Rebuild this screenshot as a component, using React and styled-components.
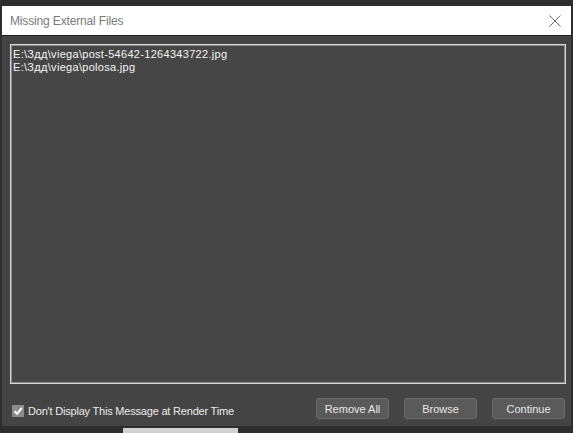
import React, { useState } from "react";
import styled, { createGlobalStyle } from "styled-components";

const Global = createGlobalStyle`
  html, body {
    margin: 0;
    padding: 0;
    background: #2e2e2e;
  }
  body {
    font-family: "Liberation Sans", Arial, sans-serif;
  }
`;

const Page = styled.div`
  width: 573px;
  height: 433px;
  overflow: hidden;
  background: #2e2e2e;
  display: flex;
  flex-direction: column;
`;

const Window = styled.div`
  margin: 6px 2px 0 2px;
  width: 569px;
  display: flex;
  flex-direction: column;
`;

const TitleBar = styled.div`
  height: 29px;
  background: #ffffff;
  border-bottom: 1px solid #1e1e1e;
  display: flex;
  align-items: center;
  justify-content: space-between;
  padding: 0 9px 0 8px;
`;

const Title = styled.span`
  font-size: 12px;
  color: #7a7a7a;
  letter-spacing: -0.15px;
`;

const Close = styled.button`
  border: none;
  background: none;
  padding: 0;
  width: 14px;
  height: 14px;
  display: flex;
  cursor: pointer;
`;

const Body = styled.div`
  background: #444444;
  height: 390px;
  padding: 8px 5px 0 8px;
  box-sizing: border-box;
  display: flex;
  flex-direction: column;
`;

const FileList = styled.div`
  height: 340px;
  box-sizing: border-box;
  border: 1px solid #d8d8d8;
  box-shadow: inset 0 0 0 1px #8a8a8a;
  background: #464646;
  padding: 3px 2px;
  display: flex;
  flex-direction: column;
`;

const FileRow = styled.div`
  font-size: 11px;
  line-height: 13px;
  letter-spacing: 0.3px;
  color: #f4f4f4;
  white-space: nowrap;
`;

const Footer = styled.div`
  display: flex;
  align-items: center;
  justify-content: space-between;
  padding: 14px 1px 0 2px;
`;

const CheckLabel = styled.label`
  display: flex;
  align-items: center;
  gap: 4px;
  font-size: 11px;
  letter-spacing: -0.2px;
  color: #ececec;
  cursor: pointer;
  margin-top: 4px;
`;

const Box = styled.span`
  width: 12px;
  height: 12px;
  background: #8c8c8c;
  display: flex;
  align-items: center;
  justify-content: center;
`;

const Buttons = styled.div`
  display: flex;
  gap: 15px;
`;

const Button = styled.button`
  width: 73px;
  height: 21px;
  box-sizing: border-box;
  border: 1px solid #6b6b6b;
  border-radius: 3px;
  background: #5a5a5a;
  color: #e8e8e8;
  font-family: "Liberation Sans", Arial, sans-serif;
  font-size: 11px;
  padding: 0;
  cursor: pointer;
`;

const Taskbar = styled.div`
  margin-top: 2px;
  margin-left: 123px;
  width: 115px;
  height: 6px;
  background: #d2d2d2;
`;

const files = [
  "E:\\Здд\\viega\\post-54642-1264343722.jpg",
  "E:\\Здд\\viega\\polosa.jpg",
];

export default function App() {
  const [checked, setChecked] = useState(true);
  return (
    <Page>
      <Global />
      <Window>
        <TitleBar>
          <Title>Missing External Files</Title>
          <Close aria-label="Close">
            <svg width="14" height="14" viewBox="0 0 14 14">
              <path d="M1.5 1.5L12.5 12.5M12.5 1.5L1.5 12.5" stroke="#6a6a6a" strokeWidth="1" />
            </svg>
          </Close>
        </TitleBar>
        <Body>
          <FileList>
            {files.map((f) => (
              <FileRow key={f}>{f}</FileRow>
            ))}
          </FileList>
          <Footer>
            <CheckLabel onClick={() => setChecked(!checked)}>
              <Box>
                {checked && (
                  <svg width="10" height="10" viewBox="0 0 10 10">
                    <path d="M1.5 5.2L4 7.8L8.8 2" stroke="#ffffff" strokeWidth="2" fill="none" />
                  </svg>
                )}
              </Box>
              Don't Display This Message at Render Time
            </CheckLabel>
            <Buttons>
              <Button>Remove All</Button>
              <Button>Browse</Button>
              <Button>Continue</Button>
            </Buttons>
          </Footer>
        </Body>
      </Window>
      <Taskbar />
    </Page>
  );
}
